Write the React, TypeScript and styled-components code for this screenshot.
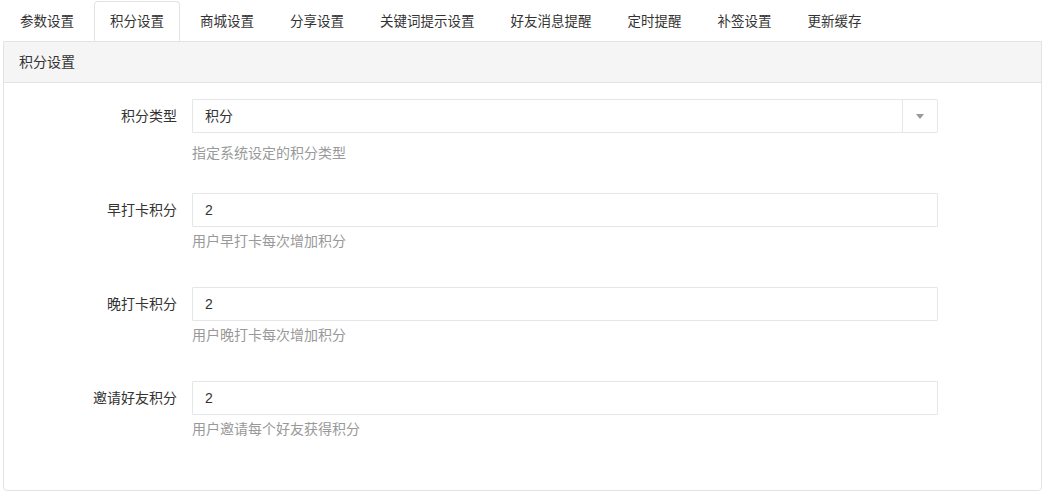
import React, { useState } from 'react';
import styled, { createGlobalStyle } from 'styled-components';

const GlobalStyle = createGlobalStyle`
  html, body {
    margin: 0;
    padding: 0;
    background: #fff;
  }
  body {
    font-family: "Liberation Sans", "Noto Sans CJK SC", sans-serif;
    font-size: 14px;
    color: #333;
  }
  * {
    box-sizing: border-box;
  }
`;

const Page = styled.div`
  padding: 1px 3px 0 3px;
`;

const TabBar = styled.ul`
  display: flex;
  list-style: none;
  margin: 0;
  padding: 0 0 0 1px;
  height: 40px;
`;

const Tab = styled.li<{ $active?: boolean }>`
  margin-right: 4px;
  padding: 0 15px;
  height: 40px;
  line-height: 40px;
  font-size: 13.5px;
  color: #333;
  cursor: pointer;
  border: 1px solid ${p => (p.$active ? '#e3e3e3' : 'transparent')};
  border-bottom: none;
  border-radius: 4px 4px 0 0;
  background: #fff;
  position: relative;
  z-index: 1;
  white-space: nowrap;
`;

const Panel = styled.div`
  border: 1px solid #e3e3e3;
  border-radius: 0 0 4px 4px;
  background: #fff;
`;

const PanelHeading = styled.div`
  height: 41px;
  padding: 0 15px;
  line-height: 40px;
  background: #f5f5f5;
  border-bottom: 1px solid #e3e3e3;
  color: #333;
`;

const PanelBody = styled.div`
  padding: 16px 0 15px 0;
`;

const FormGroup = styled.div`
  display: grid;
  grid-template-columns: 173px 746px;
  column-gap: 15px;
  height: 94px;
  align-content: start;
`;

const Label = styled.label`
  grid-column: 1;
  text-align: right;
  height: 34px;
  line-height: 34px;
  color: #333;
`;

const Field = styled.div`
  grid-column: 2;
`;

const TextInput = styled.input`
  display: block;
  width: 100%;
  height: 34px;
  padding: 0 12px;
  border: 1px solid #e5e6e7;
  border-radius: 1px;
  font-family: inherit;
  font-size: 14px;
  color: #333;
  outline: none;
  background: #fff;
`;

const SelectBox = styled.div`
  display: flex;
  height: 34px;
  border: 1px solid #e5e6e7;
  border-radius: 1px;
  background: #fff;
  cursor: pointer;
`;

const SelectValue = styled.div`
  flex: 1;
  padding: 0 12px;
  line-height: 32px;
  color: #333;
`;

const SelectArrow = styled.div`
  width: 35px;
  border-left: 1px solid #e5e6e7;
  display: flex;
  align-items: center;
  justify-content: center;

  &::after {
    content: '';
    border-left: 4px solid transparent;
    border-right: 4px solid transparent;
    border-top: 5px solid #999;
  }
`;

const Help = styled.div<{ $gap: number }>`
  margin-top: ${p => p.$gap}px;
  line-height: 17px;
  color: #999;
`;

const tabs = ['参数设置', '积分设置', '商城设置', '分享设置', '关键词提示设置', '好友消息提醒', '定时提醒', '补签设置', '更新缓存'];

const fields = [
  { label: '早打卡积分', value: '2', help: '用户早打卡每次增加积分' },
  { label: '晚打卡积分', value: '2', help: '用户晚打卡每次增加积分' },
  { label: '邀请好友积分', value: '2', help: '用户邀请每个好友获得积分' },
];

export default function App() {
  const [active, setActive] = useState(1);

  return (
    <Page>
      <GlobalStyle />
      <TabBar>
        {tabs.map((t, i) => (
          <Tab key={t} $active={i === active} onClick={() => setActive(i)}>
            {t}
          </Tab>
        ))}
      </TabBar>
      <Panel>
        <PanelHeading>积分设置</PanelHeading>
        <PanelBody>
          <FormGroup>
            <Label>积分类型</Label>
            <Field>
              <SelectBox>
                <SelectValue>积分</SelectValue>
                <SelectArrow />
              </SelectBox>
              <Help $gap={12}>指定系统设定的积分类型</Help>
            </Field>
          </FormGroup>
          {fields.map(f => (
            <FormGroup key={f.label}>
              <Label>{f.label}</Label>
              <Field>
                <TextInput defaultValue={f.value} />
                <Help $gap={6}>{f.help}</Help>
              </Field>
            </FormGroup>
          ))}
        </PanelBody>
      </Panel>
    </Page>
  );
}
